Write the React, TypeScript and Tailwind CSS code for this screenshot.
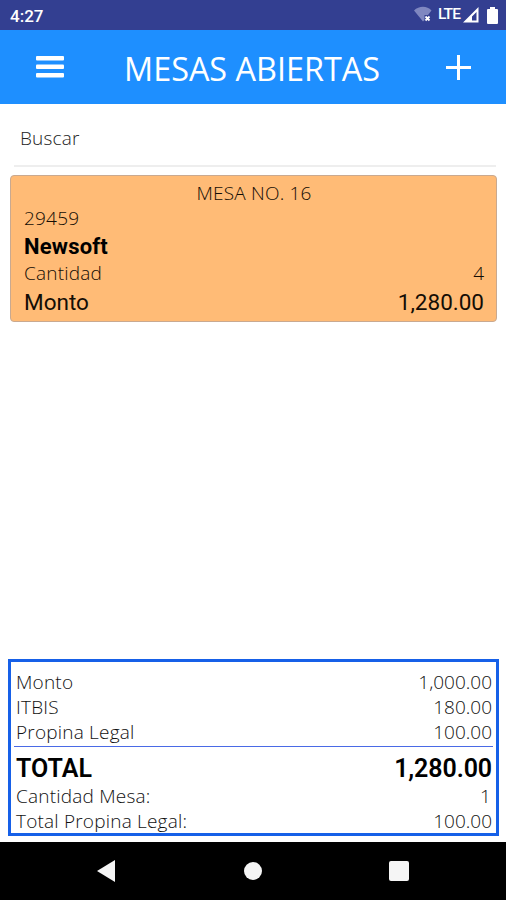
import clsx from "clsx";

interface RowProps {
  label: string;
  value?: string;
  className?: string;
  valueClassName?: string;
}

const LIGHT = "font-['Open_Sans',sans-serif] text-[19px] leading-none font-light tracking-[0.2px]";

function Row({ label, value, className, valueClassName }: RowProps) {
  return (
    <div className={clsx("flex items-center justify-between whitespace-nowrap", className)}>
      <span>{label}</span>
      {value && <span className={valueClassName ?? "tracking-normal"}>{value}</span>}
    </div>
  );
}

function StatusBar() {
  return (
    <div className="flex h-[30px] items-center justify-between bg-[#333f91] pr-[8px] pl-[10px] font-[Roboto,sans-serif] text-white">
      <span className="pt-[2px] text-[17px] leading-none font-medium">4:27</span>
      <div className="flex items-center">
        <svg width="18" height="18" viewBox="0 0 18 18">
          <path d="M0 4.500C5-.5 13-.5 17.500 4.500L14 9H10.500v5l-1.500 1.500Z" fill="#7f87c0" />
          <path d="m11.500 10.500 4 4m0-4-4 4" stroke="#fff" strokeWidth="1.800" />
        </svg>
        <span className="ml-[6px] text-[15.500px] leading-none font-medium tracking-[-0.9px]">LTE</span>
        <svg className="ml-[3px]" width="16" height="16" viewBox="0 0 16 16">
          <path d="M0 15.500 15.500 0v15.500Z M13.500 5 9 9.500v4h4.500Z" fill="#fff" fillRule="evenodd" />
        </svg>
        <svg className="ml-[8px]" width="11" height="17" viewBox="0 0 11 17">
          <path d="M3 0h5v2h2q1 0 1 1v13q0 1-1 1H1q-1 0-1-1V3q0-1 1-1h2Z" fill="#fff" />
        </svg>
      </div>
    </div>
  );
}

function Header() {
  return (
    <header className="flex h-[74px] items-center bg-[#1e8fff] pr-[35px] pl-[36px] text-white">
      <svg width="28" height="22" viewBox="0 0 28 22" fill="currentColor">
        <rect width="28" height="4.500" rx="1" />
        <rect y="8.500" width="28" height="4.500" rx="1" />
        <rect y="17" width="28" height="4.500" rx="1" />
      </svg>
      <h1 className="ml-[60px] flex-1 pt-[2px] font-['Open_Sans',sans-serif] text-[32.400px] leading-none whitespace-nowrap">
        MESAS ABIERTAS
      </h1>
      <svg width="25" height="25" viewBox="0 0 25 25" stroke="currentColor" strokeWidth="3">
        <path d="M12.500 0v25M0 12.500h25" />
      </svg>
    </header>
  );
}

function TableCard() {
  return (
    <div className="mr-[9px] ml-[10px] mt-[8px] h-[147px] rounded-[4px] border border-[#c9a990] bg-[#ffbb76] pr-[12px] pl-[13px] pt-[5px] text-[#140d05]">
      <div className={clsx("flex h-[25px] items-center justify-center", LIGHT)}>MESA NO. 16</div>
      <Row label="29459" className={clsx("h-[25px]", LIGHT)} />
      <Row
        label="Newsoft"
        className="h-[30px] pt-[2px] font-[Roboto,sans-serif] text-[22px] leading-none font-bold tracking-[0.2px] text-black"
      />
      <Row label="Cantidad" value="4" className={clsx("h-[25px]", LIGHT)} />
      <Row
        label="Monto"
        value="1,280.00"
        className="h-[32px] font-[Roboto,sans-serif] text-[22.500px] leading-none"
      />
    </div>
  );
}

function Totals() {
  return (
    <section className="mr-[7px] ml-[8px] mb-[6px] h-[177px] border-[3px] border-[#1660e8] px-[3px] pt-[7px] text-[#111]">
      <div className="border-b border-[#4a6ae6] pr-[1px] pl-[2px] pb-px">
        <Row label="Monto" value="1,000.00" className={clsx("h-[26px]", LIGHT)} />
        <Row label="ITBIS" value="180.00" className={clsx("h-[24px]", LIGHT)} />
        <Row label="Propina Legal" value="100.00" className={clsx("h-[26px]", LIGHT)} />
      </div>
      <div className="pr-[1px] pl-[2px]">
        <Row
          label="TOTAL"
          value="1,280.00"
          className="h-[42px] font-[Roboto,sans-serif] text-[25px] leading-none font-semibold text-black"
          valueClassName="tracking-[-0.1px]"
        />
        <Row
          label="Cantidad Mesa:"
          value="1"
          className={clsx("h-[15px]", LIGHT)}
          valueClassName="pr-px"
        />
        <Row label="Total Propina Legal:" value="100.00" className={clsx("h-[34px]", LIGHT)} />
      </div>
    </section>
  );
}

function NavBar() {
  return (
    <nav className="flex h-[58px] items-center justify-between bg-black pr-[97px] pl-[97px]">
      <svg width="18" height="22" viewBox="0 0 18 22">
        <path d="M0 11 18 0v22Z" fill="#f5f5f5" />
      </svg>
      <div className="ml-[2px] size-[18px] rounded-full bg-[#f5f5f5]" />
      <div className="size-[20px] rounded-[2px] bg-[#f5f5f5]" />
    </nav>
  );
}

export default function App() {
  return (
    <div className="flex h-[900px] w-[506px] flex-col overflow-hidden bg-white">
      <StatusBar />
      <Header />
      <div className="mr-[10px] ml-[14px] flex h-[63px] items-center border-b-2 border-[#eeeeee] px-[6px] pt-[8px]">
        <span className={clsx("text-[#222]", LIGHT)}>Buscar</span>
      </div>
      <TableCard />
      <div className="flex-1" />
      <Totals />
      <NavBar />
    </div>
  );
}
